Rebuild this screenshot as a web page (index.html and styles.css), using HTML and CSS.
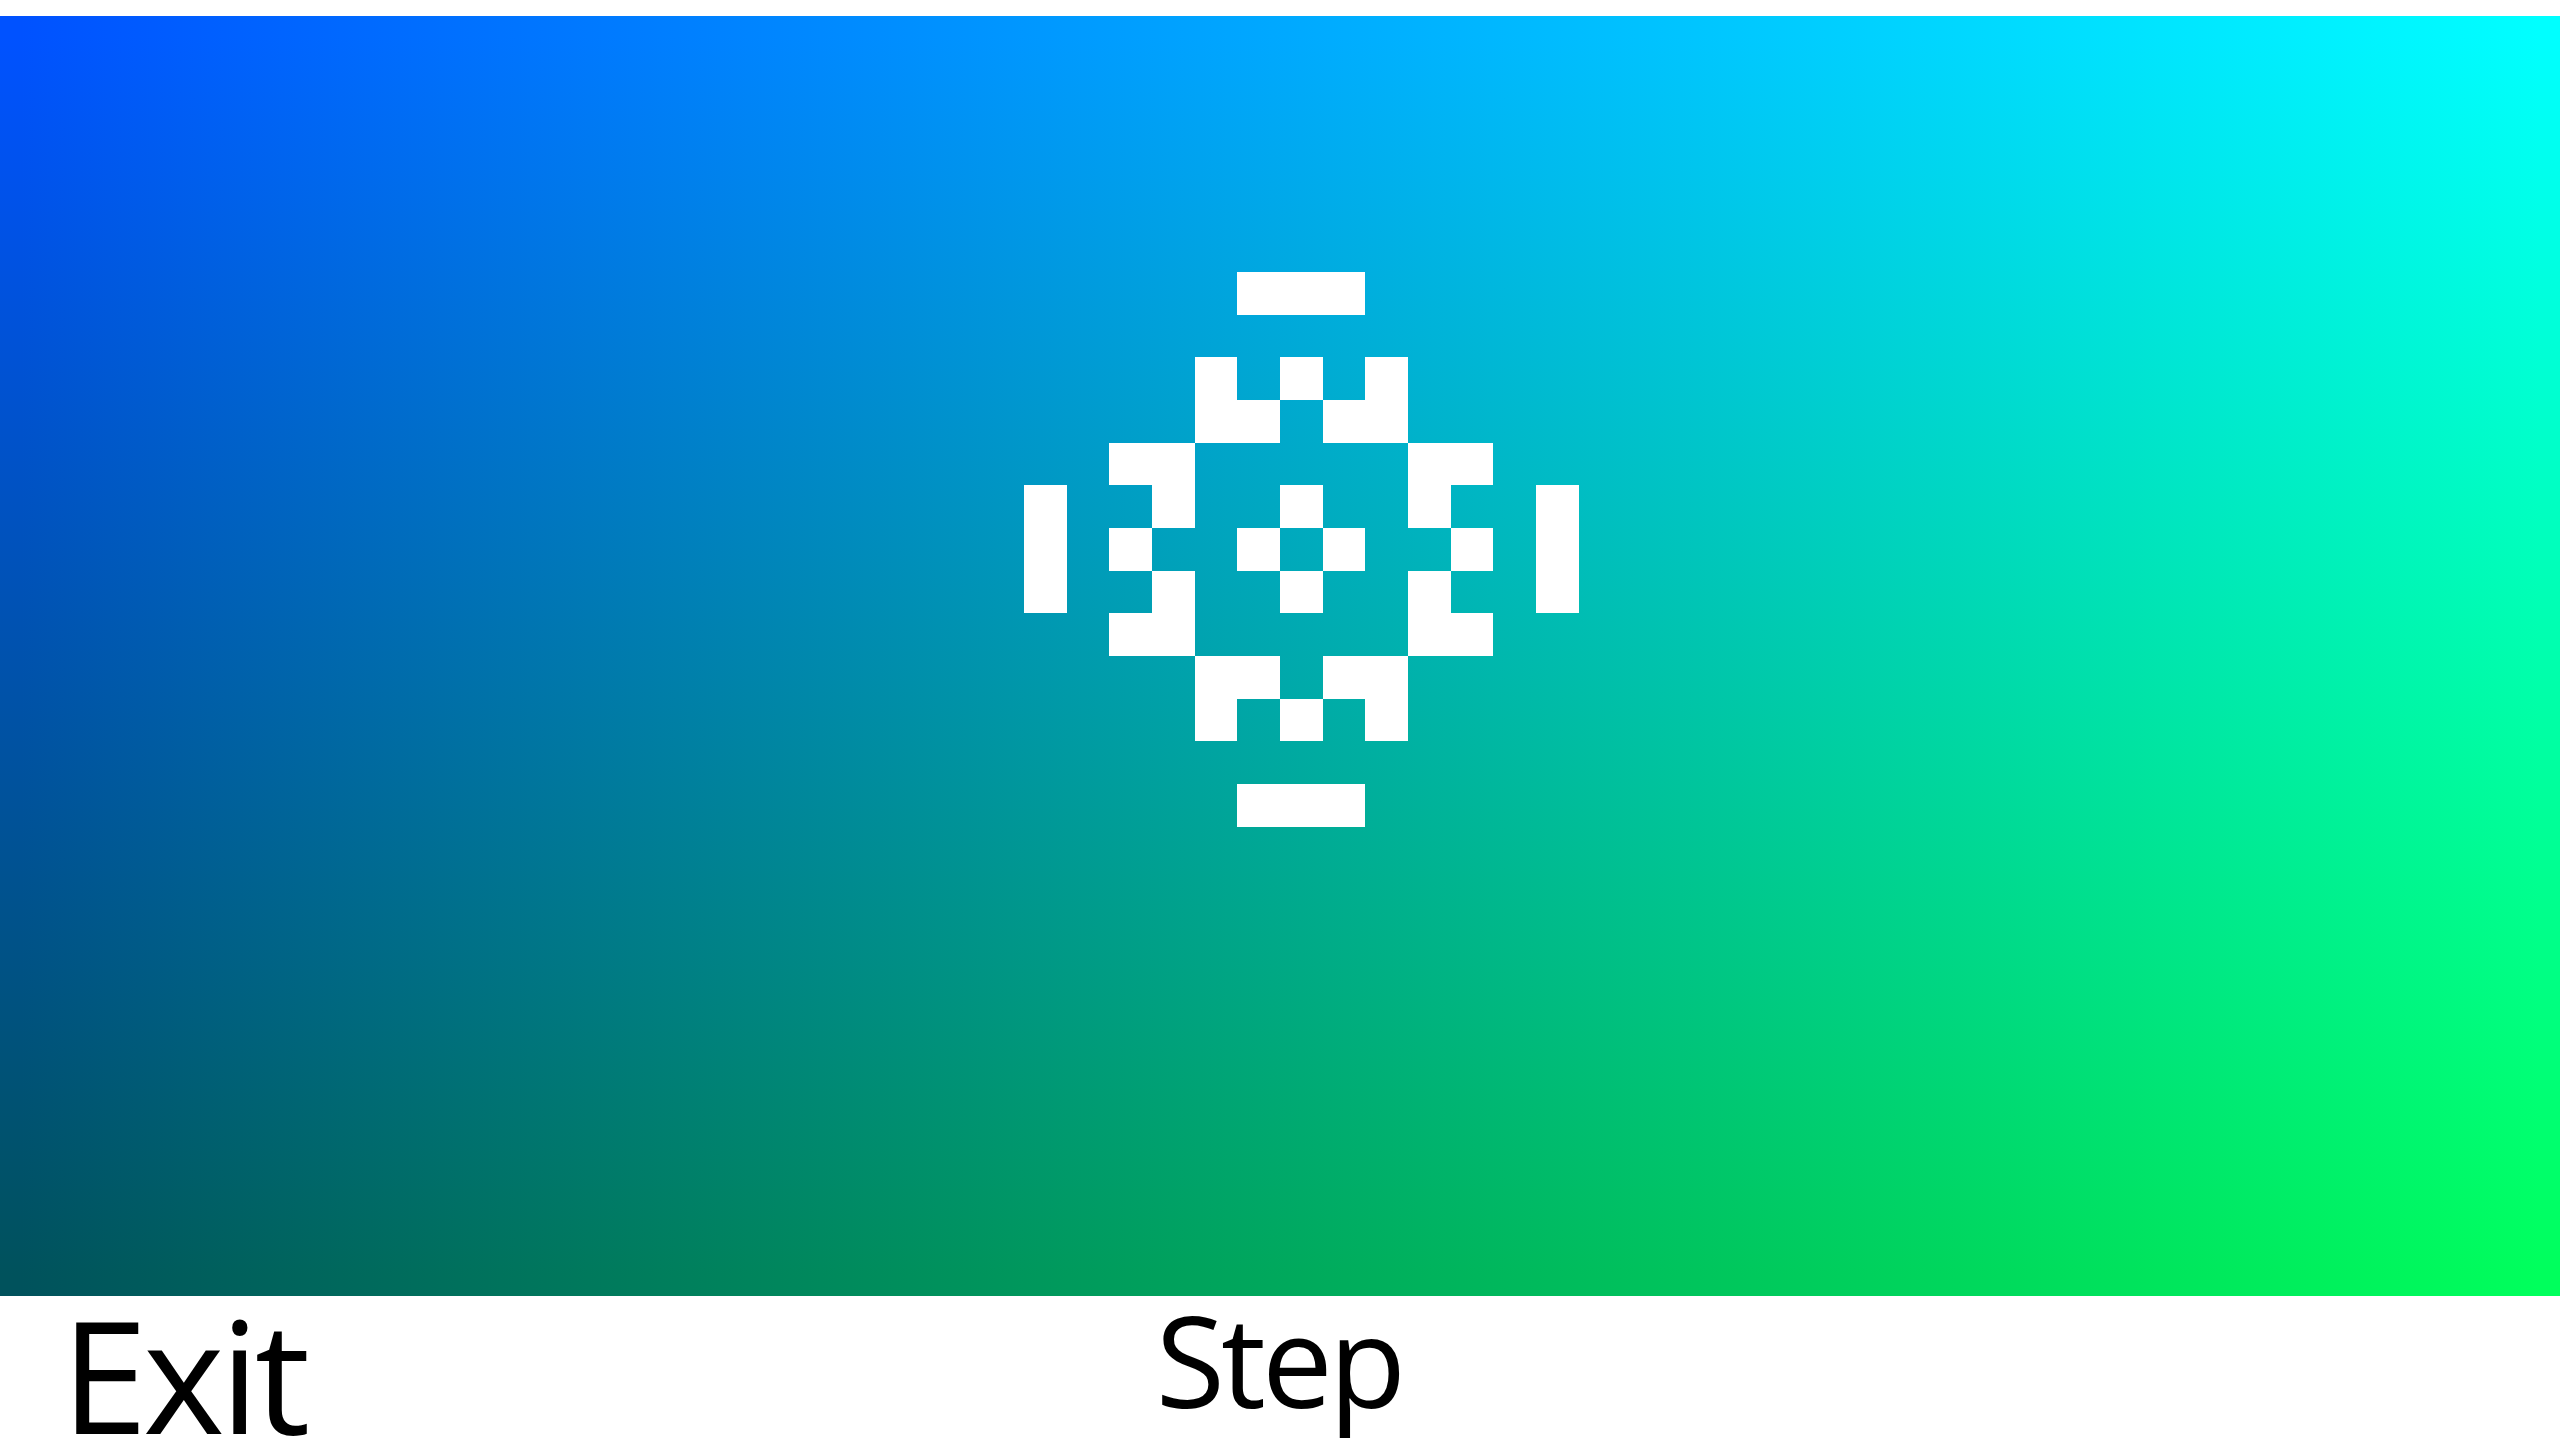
FILE: index.html
```html
<!DOCTYPE html>
<html lang="en">
<head>
<meta charset="utf-8">
<title>Life</title>
<link rel="stylesheet" href="styles.css">
</head>
<body>
<main class="app">
  <div class="board">
    <svg class="cells" viewBox="0 0 60 30" preserveAspectRatio="none" shape-rendering="crispEdges">
      <g fill="#ffffff" transform="translate(24 6)">
        <rect x="5" y="0" width="3" height="1"/>
        <rect x="4" y="2" width="1" height="2"/>
        <rect x="5" y="3" width="1" height="1"/>
        <rect x="6" y="2" width="1" height="1"/>
        <rect x="8" y="2" width="1" height="2"/>
        <rect x="7" y="3" width="1" height="1"/>
        <rect x="2" y="4" width="2" height="1"/>
        <rect x="9" y="4" width="2" height="1"/>
        <rect x="0" y="5" width="1" height="3"/>
        <rect x="3" y="5" width="1" height="1"/>
        <rect x="6" y="5" width="1" height="1"/>
        <rect x="9" y="5" width="1" height="1"/>
        <rect x="12" y="5" width="1" height="3"/>
        <rect x="2" y="6" width="1" height="1"/>
        <rect x="5" y="6" width="1" height="1"/>
        <rect x="7" y="6" width="1" height="1"/>
        <rect x="10" y="6" width="1" height="1"/>
        <rect x="3" y="7" width="1" height="1"/>
        <rect x="6" y="7" width="1" height="1"/>
        <rect x="9" y="7" width="1" height="1"/>
        <rect x="2" y="8" width="2" height="1"/>
        <rect x="9" y="8" width="2" height="1"/>
        <rect x="4" y="9" width="2" height="1"/>
        <rect x="7" y="9" width="2" height="1"/>
        <rect x="4" y="10" width="1" height="1"/>
        <rect x="6" y="10" width="1" height="1"/>
        <rect x="8" y="10" width="1" height="1"/>
        <rect x="5" y="12" width="3" height="1"/>
      </g>
    </svg>
  </div>
  <div class="controls">
    <button class="btn btn-exit" type="button">Exit</button>
    <button class="btn btn-step" type="button">Step</button>
    <span class="spacer"></span>
  </div>
</main>
</body>
</html>
```
FILE: styles.css
```css
html, body {
  margin: 0;
  padding: 0;
  background: #ffffff;
}

body {
  padding-top: 16px;
  overflow: hidden;
}

.app {
  display: flex;
  flex-direction: column;
  width: 2560px;
}

.board {
  width: 2560px;
  height: 1280px;
  background-image:
    linear-gradient(to right, rgb(0, 82, 0) 21px, rgb(0, 255, 0) 2539px),
    linear-gradient(to bottom, rgb(0, 0, 255) 21px, rgb(0, 0, 92) 1259px);
  background-blend-mode: screen;
}

.cells {
  display: block;
  width: 100%;
  height: 100%;
}

.controls {
  display: grid;
  grid-template-columns: 1fr auto 1fr;
  align-items: start;
}

.btn {
  border: 0;
  background: transparent;
  color: #000000;
  padding: 0;
  margin: 0;
  line-height: 1;
  font-family: "Open Sans", "Noto Sans", sans-serif;
  letter-spacing: -0.03em;
  cursor: pointer;
}

.btn-exit {
  justify-self: start;
  margin-left: 61px;
  font-size: 156px;
}

.btn-step {
  justify-self: center;
  margin-left: -2px;
  font-size: 126px;
}
```
